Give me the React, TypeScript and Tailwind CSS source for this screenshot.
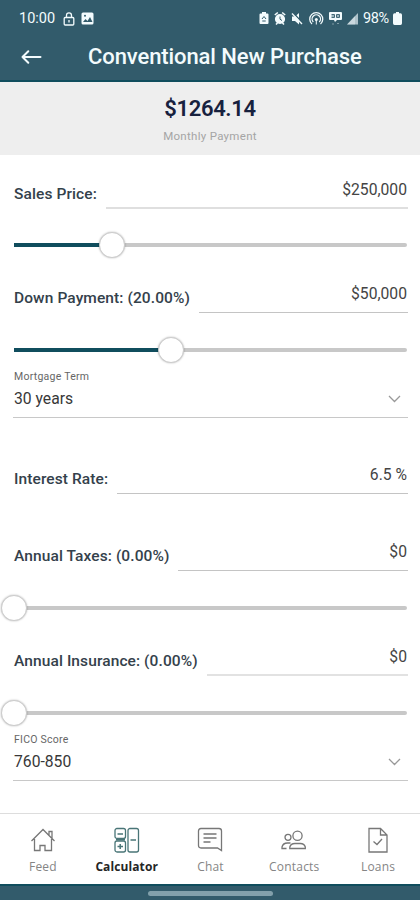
import type { ReactNode } from "react";

export default function App() {
    return (
        <div className="flex h-[900px] w-[420px] flex-col overflow-hidden bg-white font-['Roboto',sans-serif] text-[#1d2935]">
            <Header />
            <PaymentSummary />
            <main className="flex-1">
                <Field label="Sales Price:" value="$250,000" height="h-[54px]" line="border-b-2 border-[#dfdfdf]" width="w-[302px]" />
                <Slider value={98} />
                <Field label="Down Payment: (20.00%)" value="$50,000" height="h-[32px]" line="border-b border-[#c4c4c4]" width="w-[209px]" />
                <Slider value={157} offset="pt-[2px]" />
                <SelectField label="Mortgage Term" value="30 years" />
                <Field label="Interest Rate:" value="6.5 %" height="h-[76px]" line="border-b border-[#c4c4c4]" width="w-[291px]" />
                <Field label="Annual Taxes: (0.00%)" value="$0" height="h-[77px]" line="border-b border-[#c4c4c4]" width="w-[230px]" />
                <Slider value={0} offset="pt-[2px]" />
                <Field label="Annual Insurance: (0.00%)" value="$0" height="h-[33px]" line="border-b-2 border-[#e2e2e2]" width="w-[201px]" />
                <Slider value={0} offset="pt-[2px]" />
                <SelectField label="FICO Score" value="760-850" />
            </main>
            <TabBar />
            <div className="flex h-4 items-center justify-center border-t-2 border-[#104d5d] bg-[#325b6b]">
                <div className="h-[5px] w-[125px] rounded-full bg-[#82a0ab]" />
            </div>
        </div>
    )
}

function Header() {
    return (
        <header className="h-[82px] border-b-2 border-[#104d5d] bg-[#325b6b] text-[#f3fbfd]">
            <div className="flex h-[37px] items-center pr-[18px] pl-[19px] text-[14.5px]">
                <span className="w-[38px]">10:00</span>
                <svg className="ml-[6px]" width="12" height="14" viewBox="0 0 12 14" fill="none" stroke="currentColor" strokeWidth="1.3">
                    <rect x="1.2" y="5.5" width="9.6" height="7.5" rx="1" />
                    <path d="M3.5 5.5V3.4a2.5 2.5 0 0 1 5 0v2.1M6 8v2.5" />
                </svg>
                <svg className="ml-[6px]" width="13" height="13" viewBox="0 0 13 13">
                    <rect x=".5" y=".5" width="12" height="12" rx="1.5" fill="currentColor" />
                    <path d="m2 10 2.5-3 2 2 2.5-4 2.5 5z" fill="#325b6b" />
                    <circle cx="4" cy="3.8" r="1" fill="#325b6b" />
                </svg>
                <div className="ml-auto flex items-center">
                    <StatusIcons />
                    <span className="ml-[4px] w-[28px] text-[14.5px] tracking-[-0.4px]">98%</span>
                    <svg className="ml-[2px]" width="9" height="13" viewBox="0 0 9 13" fill="currentColor">
                        <path d="M3 0h3v1.3h1.5Q9 1.3 9 3v8.3Q9 13 7.5 13h-6Q0 13 0 11.3V3q0-1.7 1.5-1.7H3z" />
                    </svg>
                </div>
            </div>
            <div className="flex h-[39px] items-center">
                <svg className="ml-[21px]" width="21" height="16" viewBox="0 0 21 16" fill="none" stroke="currentColor" strokeWidth="2" strokeLinecap="round" strokeLinejoin="round">
                    <path d="M19.5 8H1.5M7.3 2.2 1.5 8l5.8 5.8" />
                </svg>
                <h1 className="ml-[46px] text-[22px] font-medium tracking-[-0.1px] whitespace-nowrap">Conventional New Purchase</h1>
            </div>
        </header>
    )
}

function StatusIcons() {
    return (
        <svg width="100" height="15" viewBox="0 0 100 15" fill="none" stroke="currentColor">
            {/* battery saver */}
            <path d="M3 1h4v1.5h1.5q1 0 1 1V12q0 1-1 1h-7q-1 0-1-1V3.5q0-1 1-1H3z" fill="currentColor" stroke="none" />
            <path d="m3 8 2-2.5L7 8M3.3 10h3.4" stroke="#325b6b" />
            {/* alarm */}
            <circle cx="21" cy="8" r="4" strokeWidth="2.2" fill="currentColor" />
            <path d="m15.8 4 3-2.5M26.2 4l-3-2.5M17 13.5l1.5-1.5M25 13.5 23.5 12" strokeWidth="1.6" />
            <path d="M21 5.5V8.2l2 1.3" stroke="#325b6b" />
            {/* muted speaker */}
            <path d="M33 5.5h3l4-3.5v11.5l-4-3.5h-3z" fill="currentColor" stroke="none" />
            <path d="m34 1.5 10 11" stroke="#325b6b" strokeWidth="1.4" />
            <path d="m33 2.5 10 10.500" strokeWidth="1.3" />
            {/* hotspot */}
            <path d="M53 13a6.5 6.5 0 1 1 8.5 0M54.3 11a4.200 4.200 0 1 1 6 0" strokeWidth="1.3" />
            <circle cx="57.3" cy="8.5" r="1.5" fill="currentColor" stroke="none" />
            <path d="M57.3 9v4.5" />
            {/* volte badge */}
            <path d="M71 1h11q1 0 1 1v6q0 1-1 1h-4l-2 2-1-2h-4q-1 0-1-1V2q0-1 1-1z" fill="currentColor" stroke="none" />
            <path d="M72.5 3.5h3v3h-3M77.5 3.5h3v3h-3zM72.5 5h3M77.5 5h3" stroke="#325b6b" strokeWidth=".9" />
            <path d="M73 13h2M78 12.500h2" opacity=".4" />
            {/* signal */}
            <path d="M99 2v11.5H88z" fill="currentColor" stroke="none" opacity=".65" />
            <path d="M96 5v8.5h-8z" fill="currentColor" stroke="none" opacity=".4" />
        </svg>
    )
}

function PaymentSummary() {
    return (
        <section className="flex h-[73px] flex-col items-center bg-[#eeeeee]">
            <p className="mt-[11px] text-[22px] leading-8 font-semibold tracking-[-0.35px] text-[#17213e]">$1264.14</p>
            <p className="mt-[2px] text-[11.5px] leading-[18px] tracking-[0.3px] text-[#a5a5a5]">Monthly Payment</p>
        </section>
    )
}

type FieldProps = {
    label: string;
    value: string;
    height: string;
    line: string;
    width: string;
}

function Field({ label, value, height, line, width }: FieldProps) {
    return (
        <div className={`mr-[12px] ml-[14px] flex items-end justify-between ${height}`}>
            <label className="mb-[5px] text-[15.5px] leading-5 font-medium tracking-[0.1px] whitespace-nowrap text-[#34414b]">{label}</label>
            <div className={`flex h-[31px] items-start justify-end pr-px text-[15.7px] leading-6 text-[#444444] ${line} ${width}`}>
                {value}
            </div>
        </div>
    )
}

function Slider({ value, offset }: { value: number; offset?: string }) {
    return (
        <div className={`relative mr-[13px] ml-[14px] flex h-[72px] items-center ${offset ?? ""}`}>
            <div className="h-1 w-full rounded-full bg-[#c8c8c8]">
                <div className="h-full bg-[#104d5d]" style={{ width: value }} />
            </div>
            <div
                className="absolute size-[26px] -translate-x-1/2 rounded-full border border-[#cccccc] bg-white shadow-[0_0_2px_rgba(0,0,0,0.3)]"
                style={{ left: value }}
            />
        </div>
    )
}

function SelectField({ label, value }: { label: string; value: string }) {
    return (
        <div className="-mt-[17px] mr-[12px] ml-[13px] h-[50px] border-b border-[#c8c8c8] pl-px">
            <p className="pt-[1px] text-[10.5px] leading-[15px] tracking-[0.25px] text-[#666666]">{label}</p>
            <div className="flex items-center justify-between pt-[3px] text-[15.7px] leading-6 text-[#383838]">
                <span>{value}</span>
                <svg className="mr-[7px]" width="13" height="8" viewBox="0 0 13 8" fill="none" stroke="#999999" strokeWidth="1.3">
                    <path d="m1 1 5.5 5.5L12 1" />
                </svg>
            </div>
        </div>
    )
}

function TabBar() {
    const tabs = [{
        label: "Feed",
        icon: <path d="m1.5 14 11.5-11.5L24.5 14M4.5 12v11.5H10v-5h5v5h6.500V12M19 8V4.5h3V11" />
    }, {
        label: "Calculator",
        icon: <>
            <rect x="1" y="1.5" width="10.5" height="10" rx="2" />
            <rect x="1" y="14" width="10.5" height="11" rx="2" />
            <rect x="14" y="1.5" width="10.5" height="23.5" rx="2" />
            <path d="M3.5 7H9M2 12.8h9M3.5 19.5H9M6.2 17v5M16.5 13H22" strokeWidth="1.5" />
        </>
    }, {
        label: "Chat",
        icon: <path d="M4 1.5h18q2.5 0 2.5 2.500v19.5L20.5 21H4q-2.5 0-2.500-2.5V4Q1.5 1.5 4 1.5zM6.5 7h13M6.5 11h13M6.5 15h7" />
    }, {
        label: "Contacts",
        icon: <>
            <circle cx="16.5" cy="8.8" r="4.6" />
            <circle cx="7" cy="10.3" r="3" />
            <path d="M8.8 21.5V20q1-3.5 5-3.5h5.5q4 0 5 3.5v1.5zM9.5 16h-3Q2 16 1 20v1.5h4.5" />
        </>
    }, {
        label: "Loans",
        icon: <path d="M4 1.5h11.5L22 8v17H4zM15.5 1.5V8H22M8.5 14.5l3.5 3 5-5.5" />
    }]

    return (
        <nav className="flex h-[71px] border-t border-[#dddddd] bg-white pl-px font-['Open_Sans',sans-serif]">
            {tabs.map((tab) => (
                <Tab key={tab.label} label={tab.label} icon={tab.icon} active={tab.label === "Calculator"} />
            ))}
        </nav>
    )
}

function Tab({ label, icon, active }: { label: string; icon: ReactNode; active: boolean }) {
    return (
        <a className="flex flex-1 flex-col items-center pt-[13px]">
            <svg width="26" height="27" viewBox="0 0 26 27" fill="none" stroke={active ? "#497577" : "#777777"} strokeWidth="1.3">
                {icon}
            </svg>
            <span className={active ? "mt-[4px] text-[12px] leading-[18px] font-bold tracking-[0.1px] text-[#252525]" : "mt-[4px] text-[12px] leading-[18px] tracking-[0.2px] text-[#858585]"}>
                {label}
            </span>
        </a>
    )
}
